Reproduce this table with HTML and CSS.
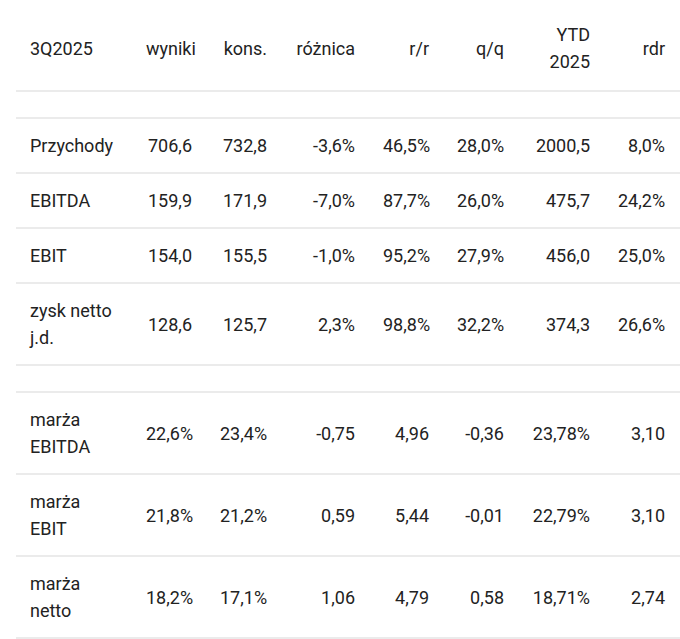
FILE: index.html
```html
<!DOCTYPE html>
<html lang="pl">
<head>
<meta charset="utf-8">
<title>3Q2025</title>
<link rel="stylesheet" href="styles.css">
</head>
<body>
<table class="results">
  <colgroup>
    <col class="c1"><col class="c2"><col class="c3"><col class="c4"><col class="c5"><col class="c6"><col class="c7"><col class="c8">
  </colgroup>
  <thead>
    <tr class="head">
      <th class="label">3Q2025</th>
      <th>wyniki</th>
      <th>kons.</th>
      <th>różnica</th>
      <th>r/r</th>
      <th>q/q</th>
      <th>YTD<br>2025</th>
      <th>rdr</th>
    </tr>
  </thead>
  <tbody>
    <tr class="spacer"><td colspan="8"></td></tr>
    <tr>
      <td class="label">Przychody</td><td>706,6</td><td>732,8</td><td>-3,6%</td><td>46,5%</td><td>28,0%</td><td>2000,5</td><td>8,0%</td>
    </tr>
    <tr>
      <td class="label">EBITDA</td><td>159,9</td><td>171,9</td><td>-7,0%</td><td>87,7%</td><td>26,0%</td><td>475,7</td><td>24,2%</td>
    </tr>
    <tr>
      <td class="label">EBIT</td><td>154,0</td><td>155,5</td><td>-1,0%</td><td>95,2%</td><td>27,9%</td><td>456,0</td><td>25,0%</td>
    </tr>
    <tr>
      <td class="label">zysk netto<br>j.d.</td><td>128,6</td><td>125,7</td><td>2,3%</td><td>98,8%</td><td>32,2%</td><td>374,3</td><td>26,6%</td>
    </tr>
    <tr class="spacer"><td colspan="8"></td></tr>
    <tr>
      <td class="label">marża<br>EBITDA</td><td>22,6%</td><td>23,4%</td><td>-0,75</td><td>4,96</td><td>-0,36</td><td>23,78%</td><td>3,10</td>
    </tr>
    <tr>
      <td class="label">marża<br>EBIT</td><td>21,8%</td><td>21,2%</td><td>0,59</td><td>5,44</td><td>-0,01</td><td>22,79%</td><td>3,10</td>
    </tr>
    <tr>
      <td class="label">marża<br>netto</td><td>18,2%</td><td>17,1%</td><td>1,06</td><td>4,79</td><td>0,58</td><td>18,71%</td><td>2,74</td>
    </tr>
  </tbody>
</table>
</body>
</html>
```

FILE: styles.css
```css
html, body {
  margin: 0;
  background: #ffffff;
}

body {
  padding: 8px 0 0 16px;
  font-family: Roboto, "Liberation Sans", sans-serif;
  font-size: 18px;
  color: #222222;
}

.results {
  width: 664px;
  border-collapse: collapse;
  table-layout: fixed;
}

.c1 { width: 116px; }
.c2 { width: 74px; }
.c3 { width: 75px; }
.c4 { width: 88px; }
.c5 { width: 74px; }
.c6 { width: 75px; }
.c7 { width: 86px; }
.c8 { width: 76px; }

.results th,
.results td {
  padding: 13px 14px;
  line-height: 27px;
  text-align: right;
  vertical-align: middle;
  white-space: nowrap;
  font-weight: 400;
}

.results th:last-child,
.results td:last-child {
  padding-right: 15px;
}

.results .label {
  text-align: left;
}

.results tr {
  border-bottom: 2px solid #ebebeb;
}

.results .head th {
  padding-top: 13px;
  padding-bottom: 15px;
}

.results .spacer td {
  padding: 0;
  height: 25px;
  line-height: 0;
}
```
